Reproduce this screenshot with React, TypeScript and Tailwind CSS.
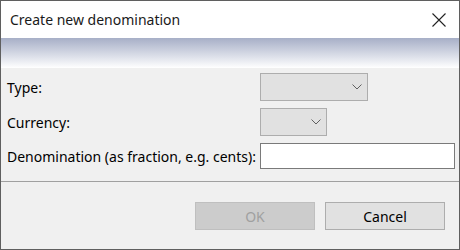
import React from "react";

function Chevron() {
	return (
		<svg width="10" height="6" viewBox="0 0 10 6" className="text-[#606060]">
			<path d="M0.5 0.5 L5 5 L9.5 0.5" fill="none" stroke="currentColor" strokeWidth="1" />
		</svg>
	);
}

export default function App() {
	return (
		<div
			className="w-[460px] h-[250px] border border-[#5f5f5f] flex flex-col bg-[#f0f0f0] text-[14px] text-black"
			style={{ fontFamily: '"Noto Sans", "Open Sans", sans-serif' }}
		>
			{/* title bar */}
			<div className="h-[37px] bg-white flex items-center justify-between pl-[9px] pr-[13px]">
				<span className="text-[14px] text-[#1a1a1a]">Create new denomination</span>
				<svg width="14" height="14" viewBox="0 0 14 14">
					<path d="M0.5 0.5 L13.5 13.5 M13.5 0.5 L0.5 13.5" stroke="#222" strokeWidth="1.1" />
				</svg>
			</div>
			<div className="h-[30px] bg-gradient-to-b from-[#a7afc7] to-white" />

			{/* form */}
			<div className="flex flex-col pt-[5px] pl-[6px]">
				<div className="flex items-center h-[28px]">
					<label className="w-[253px]">Type:</label>
					<div className="w-[108px] h-[28px] bg-[#e1e1e1] border border-[#adadad] flex items-center justify-end pr-[5px]">
						<Chevron />
					</div>
				</div>
				<div className="flex items-center h-[28px] mt-[7px]">
					<label className="w-[253px]">Currency:</label>
					<div className="w-[67px] h-[28px] bg-[#e1e1e1] border border-[#adadad] flex items-center justify-end pr-[5px]">
						<Chevron />
					</div>
				</div>
				<div className="flex items-center h-[26px] mt-[7px]">
					<label className="w-[253px] whitespace-nowrap">Denomination (as fraction, e.g. cents):</label>
					<input className="w-[195px] h-[26px] bg-white border border-[#7a7a7a] outline-none" />
				</div>
			</div>

			<div className="mt-[12px] border-t border-[#a0a0a0]" />

			{/* buttons */}
			<div className="flex justify-end gap-[10px] pt-[20px] pr-[14px]">
				<button className="w-[120px] h-[28px] bg-[#cccccc] border border-[#bfbfbf] text-[#a0a0a0]">OK</button>
				<button className="w-[120px] h-[28px] bg-[#e1e1e1] border border-[#adadad] text-black">Cancel</button>
			</div>
		</div>
	);
}
